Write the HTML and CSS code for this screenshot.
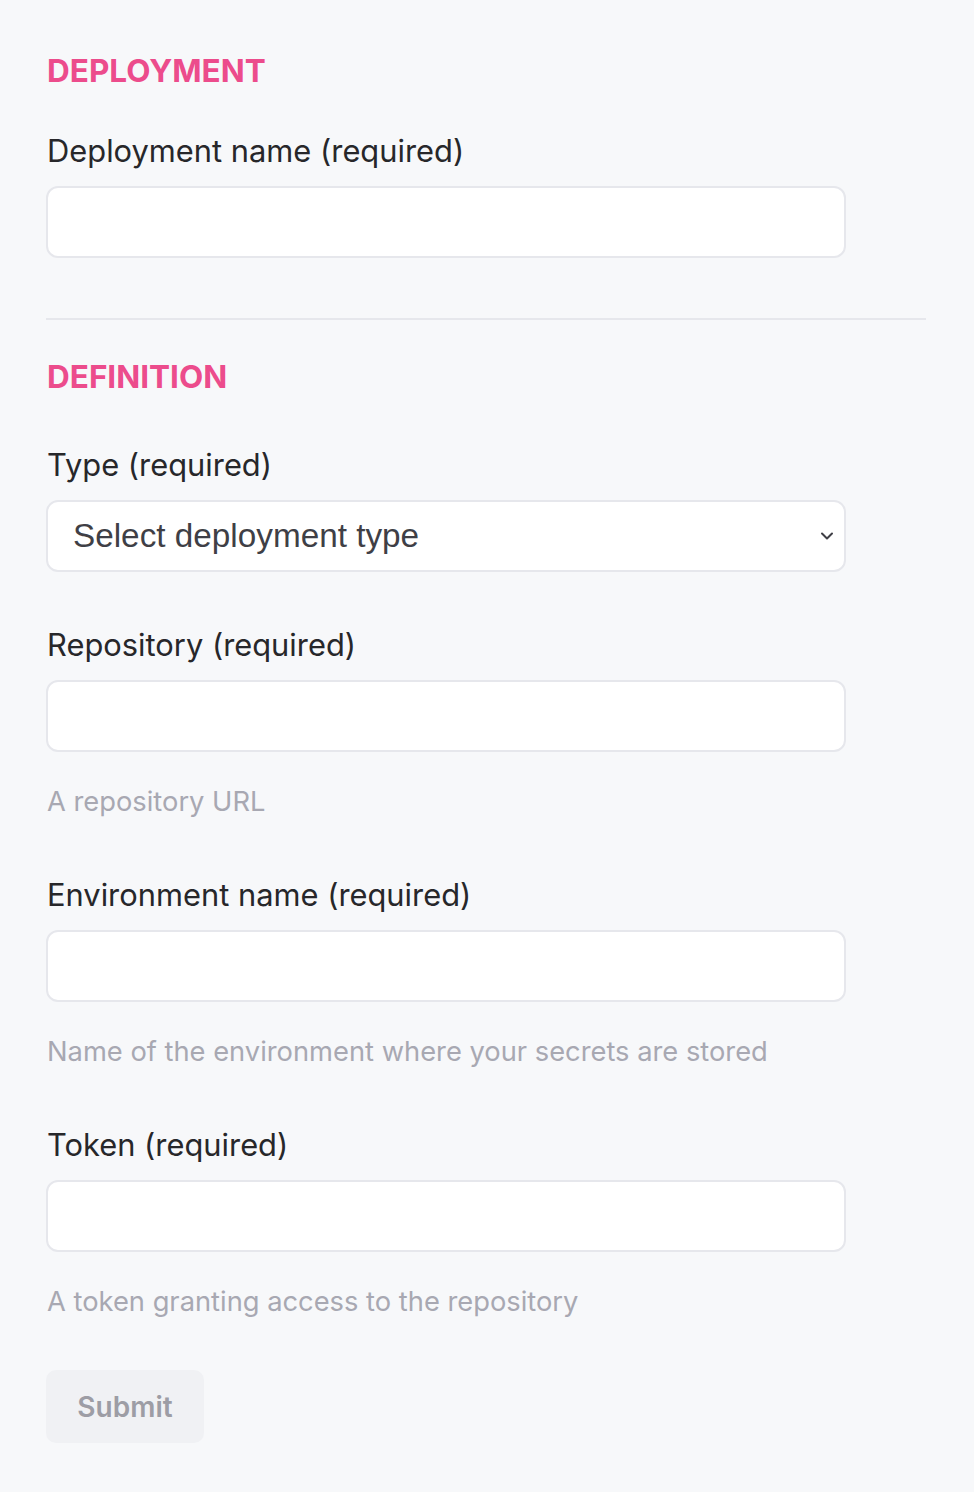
FILE: index.html
```html
<!DOCTYPE html>
<html lang="en">
<head>
<meta charset="utf-8">
<title>Deployment form</title>
<link rel="stylesheet" href="styles.css">
</head>
<body>
<form class="form">
  <section class="section">
    <h2 class="section-title">DEPLOYMENT</h2>
    <div class="field field-first">
      <label class="label">Deployment name (required)</label>
      <input class="input" type="text">
    </div>
  </section>
  <hr class="divider">
  <section class="section">
    <h2 class="section-title">DEFINITION</h2>
    <div class="field field-type">
      <label class="label">Type (required)</label>
      <div class="select">
        <span class="select-text">Select deployment type</span>
        <svg class="chevron" width="14" height="10" viewBox="0 0 14 10"><path d="M2 2.5 L7 7.5 L12 2.5" fill="none" stroke="#3f3f46" stroke-width="2" stroke-linecap="round" stroke-linejoin="round"/></svg>
      </div>
    </div>
    <div class="field">
      <label class="label">Repository (required)</label>
      <input class="input" type="text">
      <p class="help">A repository URL</p>
    </div>
    <div class="field">
      <label class="label">Environment name (required)</label>
      <input class="input" type="text">
      <p class="help">Name of the environment where your secrets are stored</p>
    </div>
    <div class="field">
      <label class="label">Token (required)</label>
      <input class="input" type="text">
      <p class="help">A token granting access to the repository</p>
    </div>
  </section>
  <button class="submit" type="button">Submit</button>
</form>
</body>
</html>
```

FILE: styles.css
```css
html, body {
  margin: 0;
  padding: 0;
  background: #f7f8fa;
}
body {
  font-family: Inter, "Noto Sans", sans-serif;
  color: #27272a;
}
.form {
  width: 880px;
  padding: 51px 0 40px 46px;
  display: flex;
  flex-direction: column;
}
.section-title {
  margin: 0 0 0 1px;
  font-size: 31.5px;
  line-height: 40px;
  font-weight: 700;
  color: #ec4c8c;
  letter-spacing: 0;
}
.field {
  display: flex;
  flex-direction: column;
  margin-top: 53px;
}
.field-first { margin-top: 40px; }
.field-type { margin-top: 48px; }
.label {
  font-size: 30.85px;
  line-height: 40px;
  color: #27272a;
  margin: 0 0 15px 1px;
}
.input {
  box-sizing: border-box;
  width: 800px;
  height: 72px;
  margin: 0;
  background: #fff;
  border: 2px solid #e6e7ec;
  border-radius: 12px;
  outline: none;
  font: inherit;
}
.select {
  box-sizing: border-box;
  width: 800px;
  height: 72px;
  background: #fff;
  border: 2px solid #e6e7ec;
  border-radius: 12px;
  display: flex;
  align-items: center;
  justify-content: space-between;
  padding: 0 10px 0 25px;
}
.select-text {
  font-family: "Liberation Sans", Arial, sans-serif;
  font-size: 33.3px;
  color: #3f3f46;
  letter-spacing: 0;
}
.help {
  margin: 30px 0 0 1px;
  font-size: 27.3px;
  line-height: 40px;
  color: #a8a8b2;
}
.divider {
  width: 880px;
  margin: 60px 0 37px;
  border: 0;
  border-top: 2px solid #e6e7ec;
  height: 0;
}
.submit {
  margin-top: 48px;
  align-self: flex-start;
  width: 158px;
  height: 73px;
  border: 0;
  border-radius: 10px;
  background: #f0f1f4;
  color: #9d9da5;
  font-family: Inter, sans-serif;
  font-size: 28px;
  font-weight: 600;
  padding: 0;
}
```
